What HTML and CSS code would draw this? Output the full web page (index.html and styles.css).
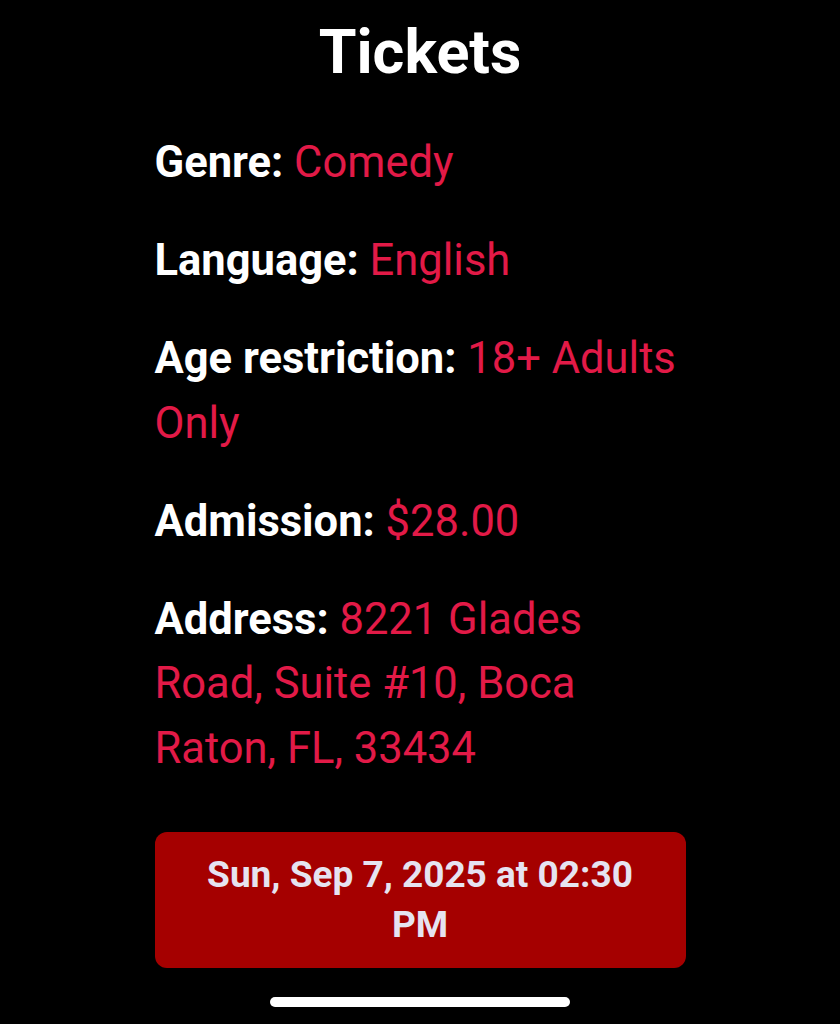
FILE: index.html
```html
<!DOCTYPE html>
<html lang="en">
<head>
<meta charset="utf-8">
<title>Tickets</title>
<link rel="stylesheet" href="styles.css">
</head>
<body>
<div class="screen">
  <h1 class="title">Tickets</h1>
  <div class="details">
    <p class="row"><span class="label">Genre:</span> <span class="value">Comedy</span></p>
    <p class="row"><span class="label">Language:</span> <span class="value">English</span></p>
    <p class="row"><span class="label">Age restriction:</span> <span class="value">18+ Adults Only</span></p>
    <p class="row"><span class="label">Admission:</span> <span class="value">$28.00</span></p>
    <p class="row"><span class="label">Address:</span> <span class="value">8221 Glades Road, Suite #10, Boca Raton, FL, 33434</span></p>
  </div>
  <button class="date-btn" type="button">Sun, Sep 7, 2025 at 02:30 PM</button>
  <div class="home-indicator"></div>
</div>
</body>
</html>
```
FILE: styles.css
```css
html, body {
  margin: 0;
  padding: 0;
  background: #000;
}
body {
  font-family: Roboto, "Noto Sans", "Liberation Sans", sans-serif;
  color: #fff;
}
.screen {
  width: 840px;
  height: 1024px;
  box-sizing: border-box;
  padding-top: 16px;
  display: flex;
  flex-direction: column;
  align-items: center;
  background: #000;
  overflow: hidden;
}
.title {
  margin: 0;
  font-size: 61px;
  line-height: 72px;
  font-weight: 700;
  color: #fff;
}
.details {
  width: 531px;
  margin-top: 43px;
  display: flex;
  flex-direction: column;
  gap: 33.5px;
}
.row {
  margin: 0;
  font-size: 43.5px;
  line-height: 64.5px;
}
.label {
  font-weight: 700;
  color: #fff;
}
.value {
  font-weight: 400;
  color: #e21a47;
}
.date-btn {
  width: 531px;
  margin-top: 51px;
  padding: 18px 30px;
  border: none;
  border-radius: 12px;
  background: #a50000;
  color: #e6e3f0;
  font-family: inherit;
  font-size: 37px;
  line-height: 50px;
  font-weight: 700;
  text-align: center;
}
.home-indicator {
  width: 300px;
  height: 10px;
  margin-top: 29px;
  border-radius: 5px;
  background: #fff;
}
```
